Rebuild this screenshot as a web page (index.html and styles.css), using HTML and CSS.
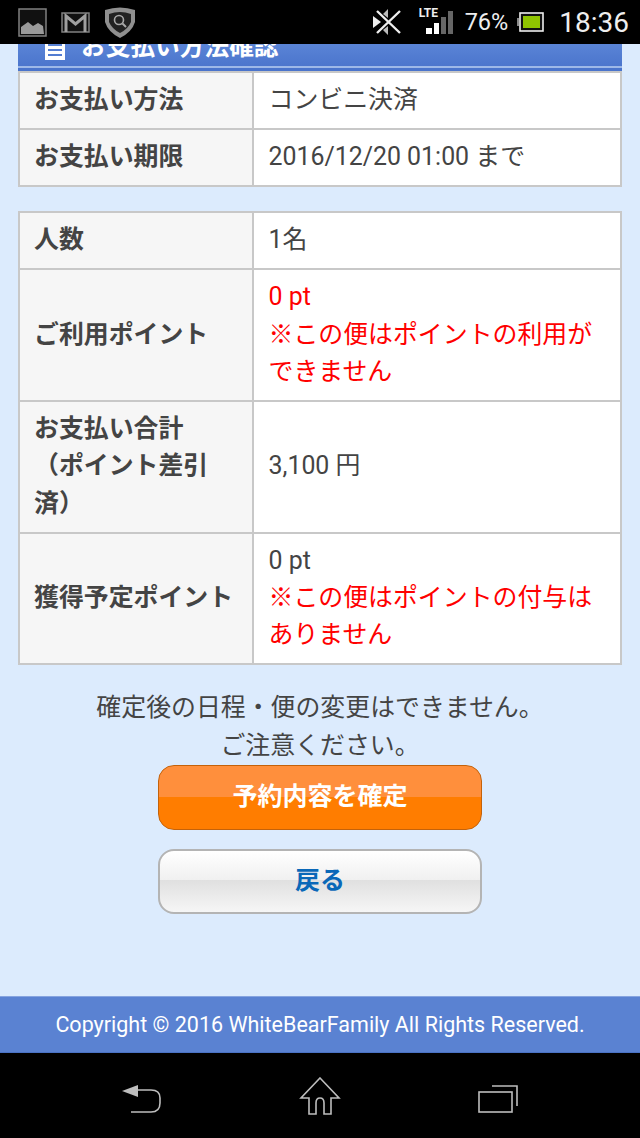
FILE: index.html
```html
<!DOCTYPE html>
<html lang="ja">
<head>
    <meta charset="utf-8">
    <title>お支払い方法確認</title>
    <link rel="stylesheet" href="styles.css">
</head>
<body>
    <div class="status-bar">
        <div class="status-left">
            <svg width="29" height="29" viewBox="0 0 29 29">
                <rect x="1" y="1" width="27" height="27" fill="#111" stroke="#808080" stroke-width="1.5"/>
                <path d="M3 26V19L10 14L15 18L20 15L25 18L26 26Z" fill="#9a9a9a"/>
            </svg>
            <svg width="29" height="21" viewBox="0 0 29 21">
                <rect x="1" y="1" width="27" height="19" fill="#111" stroke="#808080" stroke-width="1.5"/>
                <path d="M5 20V4L14.5 12L24 4V20" fill="none" stroke="#a0a0a0" stroke-width="3"/>
            </svg>
            <svg width="32" height="32" viewBox="0 0 32 32">
                <path d="M1 4Q16 -1 31 4V16Q28 26 16 32Q4 26 1 16Z" fill="#8f8f8f"/>
                <path d="M5 8Q16 4 27 8V16Q24 23 16 27Q8 23 5 16Z" fill="#222"/>
                <circle cx="15" cy="14" r="4.5" fill="none" stroke="#a8a8a8" stroke-width="1.6"/>
                <path d="M18.5 17.5L22 21" stroke="#a8a8a8" stroke-width="2"/>
            </svg>
        </div>
        <div class="status-right">
            <svg class="no-sync" width="28" height="26" viewBox="0 0 28 26">
                <path d="M4 2L27 24M27 2L4 24" stroke="#eee" stroke-width="2.4"/>
                <path d="M0 7L8 13L0 19Z" fill="#eee"/>
                <path d="M15 0V9L10 5ZM15 26V17L10 21Z" fill="#bbb"/>
            </svg>
            <div class="signal">
                <span class="lte">LTE</span>
                <svg width="27" height="23" viewBox="0 0 27 23">
                    <rect x="0" y="17" width="6" height="6" fill="#fff"/>
                    <rect x="8" y="12" width="5" height="11" fill="#fff"/>
                    <rect x="15" y="6" width="5" height="17" fill="#666"/>
                    <rect x="22" y="0" width="5" height="23" fill="#666"/>
                </svg>
            </div>
            <span class="battery-pct">76%</span>
            <svg width="27" height="20" viewBox="0 0 27 20">
                <rect x="0" y="6" width="2" height="8" fill="#888"/>
                <rect x="3" y="1" width="23" height="18" fill="#111" stroke="#eee" stroke-width="1.6"/>
                <rect x="6" y="4" width="17" height="12" fill="#8fc400"/>
            </svg>
            <span class="clock">18:36</span>
        </div>
    </div>

    <div class="page">
        <div class="section-head">
            <svg class="head-icon" width="22" height="22" viewBox="0 0 22 22">
                <path d="M1 0H21V22H1Z M4 6V8H18V6Z M4 11V13H18V11Z M4 16V18H18V16Z" fill="#fff" fill-rule="evenodd"/>
            </svg>
            <h2>お支払い方法確認</h2>
        </div>

        <table class="info first">
            <tr>
                <th>お支払い方法</th>
                <td>コンビニ決済</td>
            </tr>
            <tr>
                <th>お支払い期限</th>
                <td>2016/12/20 01:00 まで</td>
            </tr>
        </table>

        <table class="info">
            <tr>
                <th>人数</th>
                <td>1名</td>
            </tr>
            <tr>
                <th>ご利用ポイント</th>
                <td class="red">0 pt<br>※この便はポイントの利用ができません</td>
            </tr>
            <tr>
                <th>お支払い合計<br>（ポイント差引<br>済）</th>
                <td>3,100 円</td>
            </tr>
            <tr>
                <th>獲得予定ポイント</th>
                <td>0 pt<br><span class="red">※この便はポイントの付与はありません</span></td>
            </tr>
        </table>

        <p class="notice">確定後の日程・便の変更はできません。<br>ご注意ください。</p>

        <div class="actions">
            <button class="btn btn-confirm">予約内容を確定</button>
            <button class="btn btn-back">戻る</button>
        </div>

        <div class="footer">Copyright © 2016 WhiteBearFamily All Rights Reserved.</div>
    </div>

    <div class="nav-bar">
        <svg class="nav-low" width="42" height="32" viewBox="0 0 42 32">
            <path d="M1 8L17 2V14Z" fill="#bdbdbd"/>
            <path d="M16 7H30Q39 7 39 15V20Q39 29 30 29H10" fill="none" stroke="#bdbdbd" stroke-width="1.6"/>
        </svg>
        <svg width="42" height="38" viewBox="0 0 42 38">
            <path d="M21 1L40 21H32V37H25V26Q25 21 21 21Q17 21 17 26V37H10V21H2Z" fill="none" stroke="#bdbdbd" stroke-width="1.6"/>
        </svg>
        <svg class="nav-low" width="42" height="30" viewBox="0 0 42 30">
            <rect x="2" y="8" width="33" height="20" fill="none" stroke="#bdbdbd" stroke-width="1.6"/>
            <path d="M15 2H40V22" fill="none" stroke="#bdbdbd" stroke-width="1.6"/>
        </svg>
    </div>
</body>
</html>
```

FILE: styles.css
```css
* {
    box-sizing: border-box;
}

body {
    margin: 0;
    height: 1138px;
    display: flex;
    flex-direction: column;
    overflow: hidden;
    background-color: #000;
    font-family: "Roboto", "Noto Sans CJK JP", sans-serif;
    color: #333;
}

/* android bars */
.status-bar {
    height: 44px;
    flex-shrink: 0;
    background-color: #000;
    display: flex;
    justify-content: space-between;
    align-items: center;
    padding: 0 11px 0 18px;
}

.status-left {
    display: flex;
    align-items: center;
    gap: 14px;
}

.status-right {
    display: flex;
    align-items: center;
}

.no-sync {
    margin-right: 25px;
}

.signal {
    position: relative;
    margin-right: 12px;
}

.signal svg {
    display: block;
}

.lte {
    position: absolute;
    left: -7px;
    top: -5px;
    font: bold 12px "Roboto", sans-serif;
    color: #eee;
}

.battery-pct {
    font-size: 23.5px;
    color: #eee;
    margin-right: 9px;
}

.clock {
    font-size: 28px;
    color: #eee;
    margin-left: 15px;
}

.nav-bar {
    height: 85px;
    flex-shrink: 0;
    background-color: #000;
    display: flex;
    justify-content: space-between;
    align-items: center;
    padding: 0 121px;
}

.nav-low {
    margin-top: 7px;
}

/* page */
.page {
    flex: 1;
    background-color: #dcebfd;
    display: flex;
    flex-direction: column;
    padding: 0 18px;
    min-height: 0;
}

.section-head {
    height: 27px;
    flex-shrink: 0;
    display: flex;
    align-items: flex-end;
    gap: 15px;
    padding-left: 26px;
    overflow: hidden;
    background: linear-gradient(#5a84d6, #4a74cc);
    border-bottom: 3px solid #4a74cc;
    box-shadow: inset 0 -2px 0 #9db8e8;
}

.head-icon {
    margin-bottom: 8px;
    flex-shrink: 0;
}

.section-head h2 {
    margin: 0 0 6px;
    font-size: 24.7px;
    line-height: 30px;
    font-weight: bold;
    color: #fff;
    white-space: nowrap;
}

.info {
    width: 100%;
    border-collapse: collapse;
    table-layout: fixed;
    margin-bottom: 24px;
    background-color: #fff;
}

.info th,
.info td {
    border: 2px solid #c8c8c8;
    padding: 8px 14px 9.8px 14.5px;
    font-size: 24.9px;
    line-height: 37.3px;
    text-align: left;
    color: #444;
    font-weight: normal;
}

.info th {
    width: 234px;
    padding-left: 14px;
    background-color: #f6f6f6;
    font-weight: bold;
}

.info td.red,
.info .red {
    color: #f00;
}

.notice {
    margin: 0 0 1px;
    text-align: center;
    font-size: 24.9px;
    line-height: 37.5px;
    color: #444;
}

.actions {
    display: flex;
    flex-direction: column;
    align-items: center;
    gap: 19px;
}

.btn {
    width: 324px;
    height: 65px;
    border-radius: 16px;
    font-family: inherit;
    font-size: 25px;
    font-weight: bold;
    padding: 0 0 8px;
}

.btn-confirm {
    border: 1px solid #c4620a;
    color: #fff;
    background: linear-gradient(#ff8f3c 50%, #ff7d00 50%);
}

.btn-back {
    border: 2px solid #b4b4b4;
    color: #0a68b8;
    background: linear-gradient(#fff, #f0f0f0 48%, #e0e0e0 48%, #f6f6f6);
}

.footer {
    margin: auto -18px 0;
    height: 57px;
    flex-shrink: 0;
    background-color: #5a82d2;
    border-top: 1px solid #86a4e0;
    border-bottom: 1px solid #4a72c4;
    color: #fff;
    font-size: 21.5px;
    line-height: 55px;
    text-align: center;
}
```
